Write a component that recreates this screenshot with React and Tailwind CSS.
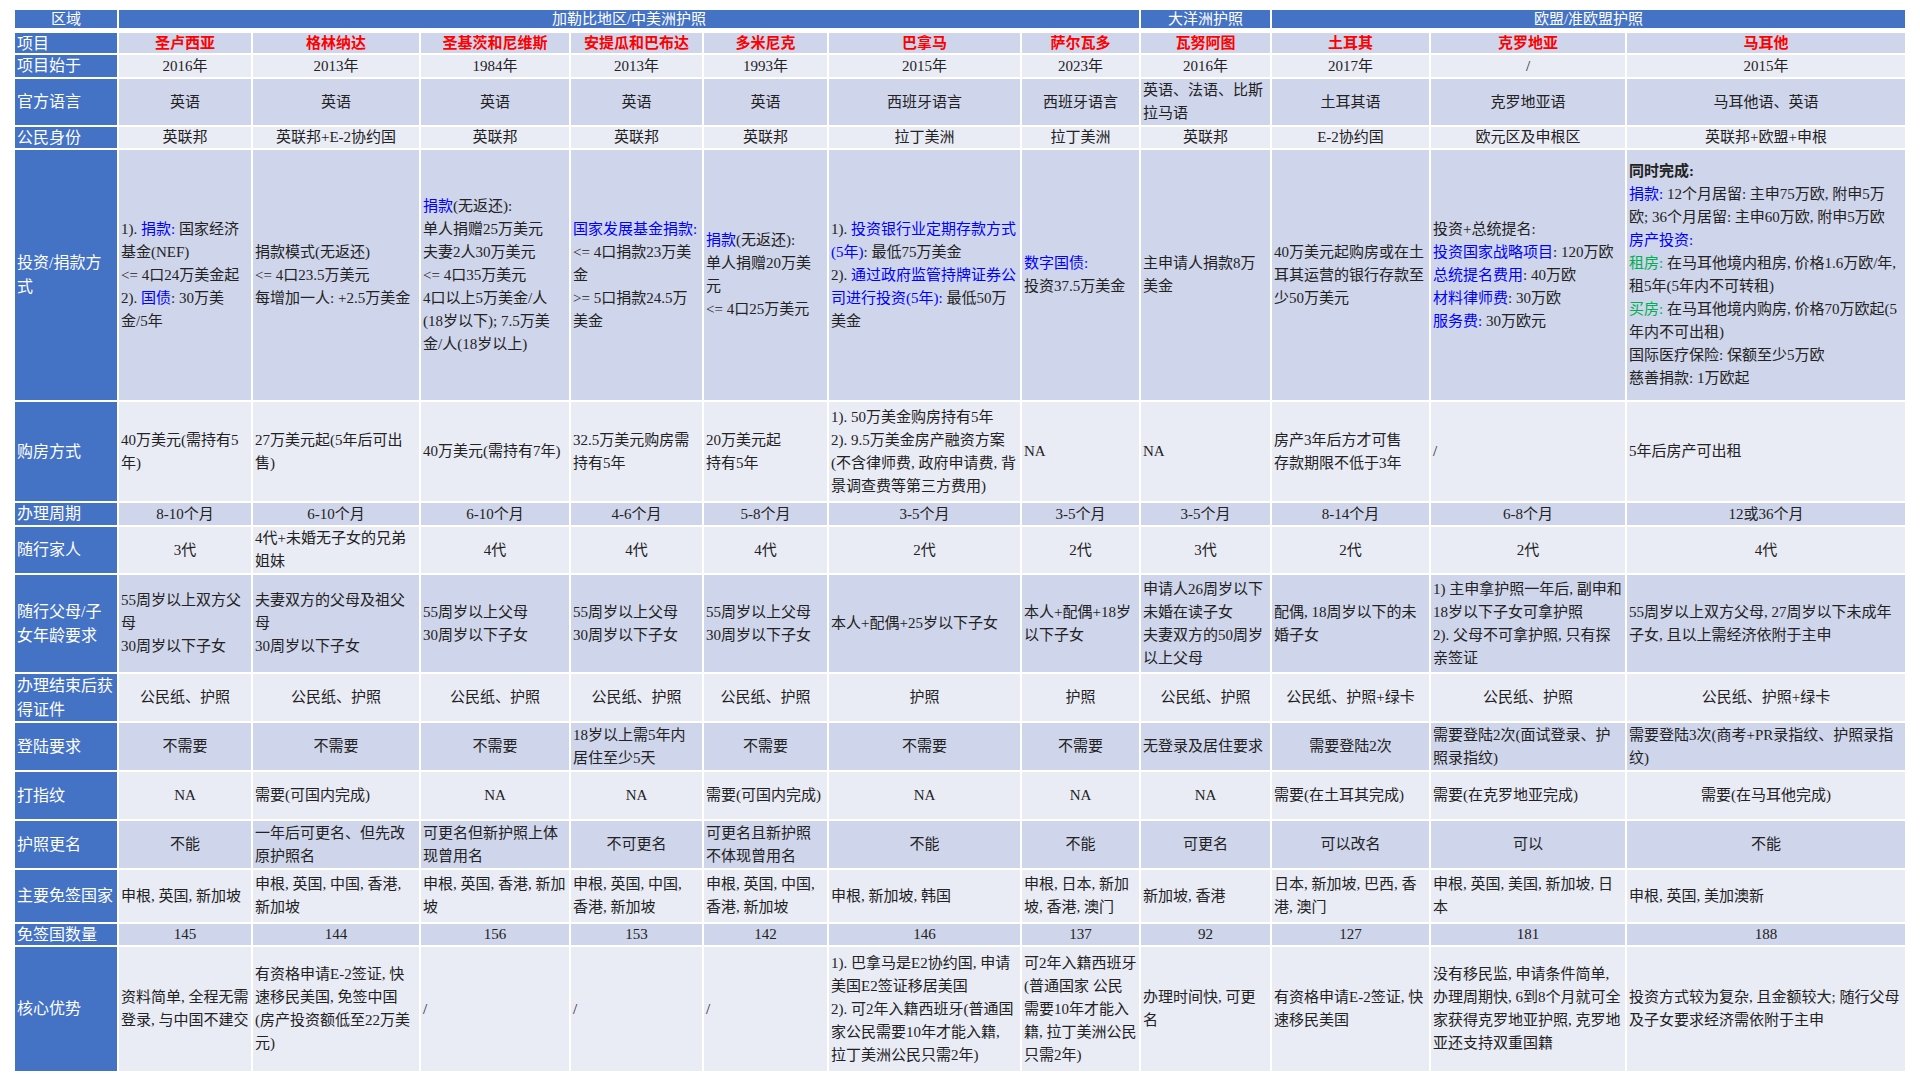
const B = ({ children }) => <span className="text-[#0000ff]">{children}</span>;
const G = ({ children }) => <span className="text-[#00b050]">{children}</span>;
const L = (c) => ({ l: true, c });

const dark = 'bg-[#cfd5ea]';
const light = 'bg-[#e9ebf5]';

const countries = ['圣卢西亚', '格林纳达', '圣基茨和尼维斯', '安提瓜和巴布达', '多米尼克', '巴拿马', '萨尔瓦多', '瓦努阿图', '土耳其', '克罗地亚', '马耳他'];

const rows = [
  { label: '项目始于', bg: light, cells: ['2016年', '2013年', '1984年', '2013年', '1993年', '2015年', '2023年', '2016年', '2017年', '/', '2015年'] },
  { label: '官方语言', bg: dark, cells: ['英语', '英语', '英语', '英语', '英语', '西班牙语言', '西班牙语言', L('英语、法语、比斯拉马语'), '土耳其语', '克罗地亚语', '马耳他语、英语'] },
  { label: '公民身份', bg: light, cells: ['英联邦', '英联邦+E-2协约国', '英联邦', '英联邦', '英联邦', '拉丁美洲', '拉丁美洲', '英联邦', 'E-2协约国', '欧元区及申根区', '英联邦+欧盟+申根'] },
  {
    label: '投资/捐款方式', bg: dark, cells: [
      L(<>1). <B>捐款:</B> 国家经济基金(NEF)<br />&lt;= 4口24万美金起<br />2). <B>国债</B>: 30万美金/5年</>),
      L(<>捐款模式(无返还)<br />&lt;= 4口23.5万美元<br />每增加一人: +2.5万美金</>),
      L(<><B>捐款</B>(无返还):<br />单人捐赠25万美元<br />夫妻2人30万美元<br />&lt;= 4口35万美元<br />4口以上5万美金/人(18岁以下); 7.5万美金/人(18岁以上)</>),
      L(<><B>国家发展基金捐款:</B><br />&lt;= 4口捐款23万美金<br />&gt;= 5口捐款24.5万美金</>),
      L(<><B>捐款</B>(无返还):<br />单人捐赠20万美元<br />&lt;= 4口25万美元</>),
      L(<>1). <B>投资银行业定期存款方式(5年)</B>: 最低75万美金<br />2). <B>通过政府监管持牌证券公司进行投资(5年):</B> 最低50万美金</>),
      L(<><B>数字国债:</B><br />投资37.5万美金</>),
      L('主申请人捐款8万美金'),
      L('40万美元起购房或在土耳其运营的银行存款至少50万美元'),
      L(<>投资+总统提名:<br /><B>投资国家战略项目</B>: 120万欧<br /><B>总统提名费用</B>: 40万欧<br /><B>材料律师费</B>: 30万欧<br /><B>服务费:</B> 30万欧元</>),
      L(<><b>同时完成:</b><br /><B>捐款:</B> 12个月居留: 主申75万欧, 附申5万欧; 36个月居留: 主申60万欧, 附申5万欧<br /><B>房产投资:</B><br /><G>租房:</G> 在马耳他境内租房, 价格1.6万欧/年, 租5年(5年内不可转租)<br /><G>买房:</G> 在马耳他境内购房, 价格70万欧起(5年内不可出租)<br />国际医疗保险: 保额至少5万欧<br />慈善捐款: 1万欧起</>),
    ]
  },
  {
    label: '购房方式', bg: light, cells: [
      L('40万美元(需持有5年)'), L('27万美元起(5年后可出售)'), L('40万美元(需持有7年)'), L('32.5万美元购房需持有5年'), L(<>20万美元起<br />持有5年</>),
      L(<>1). 50万美金购房持有5年<br />2). 9.5万美金房产融资方案(不含律师费, 政府申请费, 背景调查费等第三方费用)</>),
      L('NA'), L('NA'), L(<>房产3年后方才可售<br />存款期限不低于3年</>), L('/'), L('5年后房产可出租'),
    ]
  },
  { label: '办理周期', bg: dark, cells: ['8-10个月', '6-10个月', '6-10个月', '4-6个月', '5-8个月', '3-5个月', '3-5个月', '3-5个月', '8-14个月', '6-8个月', '12或36个月'] },
  { label: '随行家人', bg: light, cells: ['3代', L('4代+未婚无子女的兄弟姐妹'), '4代', '4代', '4代', '2代', '2代', '3代', '2代', '2代', '4代'] },
  {
    label: '随行父母/子女年龄要求', bg: dark, cells: [
      L(<>55周岁以上双方父母<br />30周岁以下子女</>), L(<>夫妻双方的父母及祖父母<br />30周岁以下子女</>), L(<>55周岁以上父母<br />30周岁以下子女</>), L(<>55周岁以上父母<br />30周岁以下子女</>), L(<>55周岁以上父母<br />30周岁以下子女</>),
      L('本人+配偶+25岁以下子女'), L('本人+配偶+18岁以下子女'), L(<>申请人26周岁以下未婚在读子女<br />夫妻双方的50周岁以上父母</>), L('配偶, 18周岁以下的未婚子女'),
      L(<>1) 主申拿护照一年后, 副申和18岁以下子女可拿护照<br />2). 父母不可拿护照, 只有探亲签证</>), L('55周岁以上双方父母, 27周岁以下未成年子女, 且以上需经济依附于主申'),
    ]
  },
  { label: '办理结束后获得证件', bg: light, cells: ['公民纸、护照', '公民纸、护照', '公民纸、护照', '公民纸、护照', '公民纸、护照', '护照', '护照', '公民纸、护照', '公民纸、护照+绿卡', '公民纸、护照', '公民纸、护照+绿卡'] },
  { label: '登陆要求', bg: dark, cells: ['不需要', '不需要', '不需要', L('18岁以上需5年内居住至少5天'), '不需要', '不需要', '不需要', L('无登录及居住要求'), '需要登陆2次', L('需要登陆2次(面试登录、护照录指纹)'), L('需要登陆3次(商考+PR录指纹、护照录指纹)')] },
  { label: '打指纹', bg: light, cells: ['NA', L('需要(可国内完成)'), 'NA', 'NA', L('需要(可国内完成)'), 'NA', 'NA', 'NA', L('需要(在土耳其完成)'), L('需要(在克罗地亚完成)'), '需要(在马耳他完成)'] },
  { label: '护照更名', bg: dark, cells: ['不能', L('一年后可更名、但先改原护照名'), L('可更名但新护照上体现曾用名'), '不可更名', L('可更名且新护照不体现曾用名'), '不能', '不能', '可更名', '可以改名', '可以', '不能'] },
  { label: '主要免签国家', bg: light, cells: [L('申根, 英国, 新加坡'), L('申根, 英国, 中国, 香港, 新加坡'), L('申根, 英国, 香港, 新加坡'), L('申根, 英国, 中国, 香港, 新加坡'), L('申根, 英国, 中国, 香港, 新加坡'), L('申根, 新加坡, 韩国'), L('申根, 日本, 新加坡, 香港, 澳门'), L('新加坡, 香港'), L('日本, 新加坡, 巴西, 香港, 澳门'), L('申根, 英国, 美国, 新加坡, 日本'), L('申根, 英国, 美加澳新')] },
  { label: '免签国数量', bg: dark, cells: ['145', '144', '156', '153', '142', '146', '137', '92', '127', '181', '188'] },
  {
    label: '核心优势', bg: light, cells: [
      L('资料简单, 全程无需登录, 与中国不建交'), L('有资格申请E-2签证, 快速移民美国, 免签中国(房产投资额低至22万美元)'), L('/'), L('/'), L('/'),
      L(<>1). 巴拿马是E2协约国, 申请美国E2签证移居美国<br />2). 可2年入籍西班牙(普通国家公民需要10年才能入籍, 拉丁美洲公民只需2年)</>),
      L('可2年入籍西班牙(普通国家 公民需要10年才能入籍, 拉丁美洲公民只需2年)'), L('办理时间快, 可更名'), L('有资格申请E-2签证, 快速移民美国'),
      L('没有移民监, 申请条件简单, 办理周期快, 6到8个月就可全家获得克罗地亚护照, 克罗地亚还支持双重国籍'), L('投资方式较为复杂, 且金额较大; 随行父母及子女要求经济需依附于主申'),
    ]
  },
];

const cols = 'grid-cols-[102px_132px_166px_148px_131px_123px_191px_117px_129px_157px_194px_278px]';

export default function App() {
  return (
    <div className="w-[1920px] h-[1080px] bg-white pl-[15px] pt-[10px] text-[#222] text-[15px] leading-[23px]" style={{ fontFamily: '"Liberation Serif", "Noto Sans CJK SC", serif' }}>
      <div className={`grid ${cols} gap-x-[2px] w-[1890px] h-[18px] text-white text-[15px] leading-[18px]`}>
        <div className="bg-[#4472c4] text-center">区域</div>
        <div className="col-span-7 bg-[#4472c4] text-center">加勒比地区/中美洲护照</div>
        <div className="bg-[#4472c4] text-center">大洋洲护照</div>
        <div className="col-span-3 bg-[#4472c4] text-center">欧盟/准欧盟护照</div>
      </div>
      <div className={`grid ${cols} gap-[2px] w-[1890px] mt-[5px] grid-rows-[20px_22px_46px_21px_250px_99px_22px_46px_97px_47px_47px_47px_47px_52px_21px_124px]`}>
        <div className="bg-[#4472c4] text-white text-[16px] flex items-center px-[2px]">项目</div>
        {countries.map((c) => (
          <div key={c} className="bg-[#cfd5ea] text-[#ff0000] text-[15px] font-bold flex items-center justify-center">{c}</div>
        ))}
        {rows.map((r) => (
          <div key={r.label} className="contents">
            <div className="bg-[#4472c4] text-white text-[16px] leading-[24px] flex items-center px-[2px]">{r.label}</div>
            {r.cells.map((cell, i) => {
              const left = typeof cell === 'object' && cell !== null && cell.l;
              return (
                <div key={i} className={`${r.bg} flex items-center px-[2px] overflow-hidden ${left ? 'text-left' : 'justify-center text-center'}`}>
                  <div>{left ? cell.c : cell}</div>
                </div>
              );
            })}
          </div>
        ))}
      </div>
    </div>
  );
}
